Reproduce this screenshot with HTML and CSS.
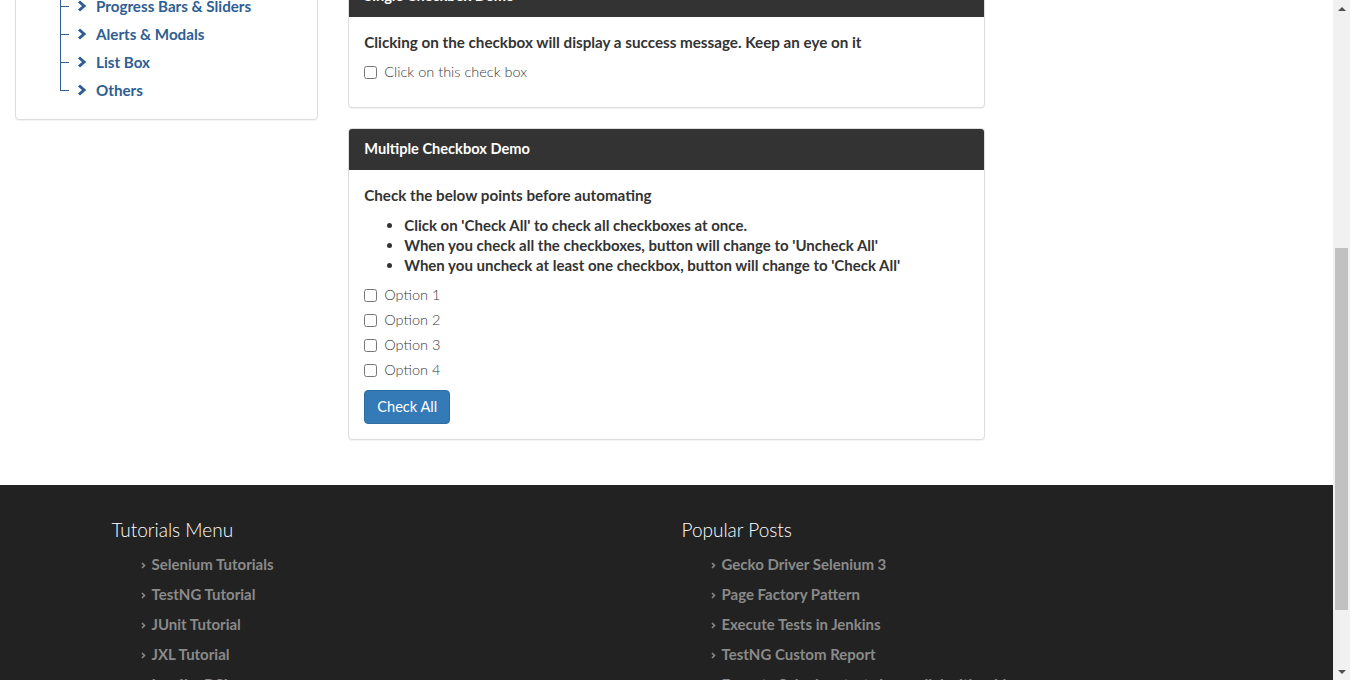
FILE: index.html
```html
<!DOCTYPE html>
<html lang="en">
<head>
<meta charset="utf-8">
<title>Selenium Easy - Checkbox demo</title>
<link rel="stylesheet" href="styles.css">
</head>
<body>
<header class="site-header">
  <div class="brand">Selenium Easy</div>
  <div class="tagline">Learn Selenium with Best Practices and Examples</div>
</header>
<nav class="navbar">
  <a class="nav-link">Demo Home</a>
  <a class="nav-link">Input Forms</a>
  <a class="nav-link">Date pickers</a>
  <a class="nav-link">Table</a>
  <a class="nav-link">Progress Bars</a>
  <a class="nav-link">Alerts &amp; Modals</a>
  <a class="nav-link">List Box</a>
  <a class="nav-link">Others</a>
</nav>

<div class="page">
  <aside class="sidebar">
    <div class="panel">
      <div class="panel-heading">Menu List</div>
      <div class="panel-body">
        <ul class="tree">
          <li><a class="tree-link"><svg class="chev" viewBox="0 0 9 12" width="9" height="12"><polyline points="2,1.5 7,6 2,10.5"/></svg>Input Forms</a></li>
          <li><a class="tree-link"><svg class="chev" viewBox="0 0 9 12" width="9" height="12"><polyline points="2,1.5 7,6 2,10.5"/></svg>Date pickers</a></li>
          <li><a class="tree-link"><svg class="chev" viewBox="0 0 9 12" width="9" height="12"><polyline points="2,1.5 7,6 2,10.5"/></svg>Table</a></li>
          <li><a class="tree-link"><svg class="chev" viewBox="0 0 9 12" width="9" height="12"><polyline points="2,1.5 7,6 2,10.5"/></svg>Progress Bars &amp; Sliders</a></li>
          <li><a class="tree-link"><svg class="chev" viewBox="0 0 9 12" width="9" height="12"><polyline points="2,1.5 7,6 2,10.5"/></svg>Alerts &amp; Modals</a></li>
          <li><a class="tree-link"><svg class="chev" viewBox="0 0 9 12" width="9" height="12"><polyline points="2,1.5 7,6 2,10.5"/></svg>List Box</a></li>
          <li><a class="tree-link"><svg class="chev" viewBox="0 0 9 12" width="9" height="12"><polyline points="2,1.5 7,6 2,10.5"/></svg>Others</a></li>
        </ul>
      </div>
    </div>
  </aside>

  <main class="content">
    <div class="intro">This would be your first example to start with if you are a beginner. Below are the two examples to check a single checkbox and multiple checkboxes.</div>

    <div class="panel">
      <div class="panel-heading">Single Checkbox Demo</div>
      <div class="panel-body">
        <p class="lead-text">Clicking on the checkbox will display a success message. Keep an eye on it</p>
        <div class="checkbox"><label><input type="checkbox">Click on this check box</label></div>
      </div>
    </div>

    <div class="panel">
      <div class="panel-heading">Multiple Checkbox Demo</div>
      <div class="panel-body">
        <p class="lead-text">Check the below points before automating</p>
        <ul class="points">
          <li>Click on 'Check All' to check all checkboxes at once.</li>
          <li>When you check all the checkboxes, button will change to 'Uncheck All'</li>
          <li>When you uncheck at least one checkbox, button will change to 'Check All'</li>
        </ul>
        <div class="checkbox"><label><input type="checkbox">Option 1</label></div>
        <div class="checkbox"><label><input type="checkbox">Option 2</label></div>
        <div class="checkbox"><label><input type="checkbox">Option 3</label></div>
        <div class="checkbox"><label><input type="checkbox">Option 4</label></div>
        <button class="btn" type="button">Check All</button>
      </div>
    </div>
  </main>
</div>

<footer class="footer">
  <div class="footer-inner">
    <div class="footer-col">
      <h3 class="footer-title">Tutorials Menu</h3>
      <ul class="footer-list">
        <li><svg class="fchev" viewBox="0 0 5 7" width="5" height="7"><polyline points="1,1 3.5,3.5 1,6"/></svg>Selenium Tutorials</li>
        <li><svg class="fchev" viewBox="0 0 5 7" width="5" height="7"><polyline points="1,1 3.5,3.5 1,6"/></svg>TestNG Tutorial</li>
        <li><svg class="fchev" viewBox="0 0 5 7" width="5" height="7"><polyline points="1,1 3.5,3.5 1,6"/></svg>JUnit Tutorial</li>
        <li><svg class="fchev" viewBox="0 0 5 7" width="5" height="7"><polyline points="1,1 3.5,3.5 1,6"/></svg>JXL Tutorial</li>
        <li><svg class="fchev" viewBox="0 0 5 7" width="5" height="7"><polyline points="1,1 3.5,3.5 1,6"/></svg>Log4j + DSL</li>
        <li><svg class="fchev" viewBox="0 0 5 7" width="5" height="7"><polyline points="1,1 3.5,3.5 1,6"/></svg>Maven Tutorial</li>
      </ul>
    </div>
    <div class="footer-col">
      <h3 class="footer-title">Popular Posts</h3>
      <ul class="footer-list">
        <li><svg class="fchev" viewBox="0 0 5 7" width="5" height="7"><polyline points="1,1 3.5,3.5 1,6"/></svg>Gecko Driver Selenium 3</li>
        <li><svg class="fchev" viewBox="0 0 5 7" width="5" height="7"><polyline points="1,1 3.5,3.5 1,6"/></svg>Page Factory Pattern</li>
        <li><svg class="fchev" viewBox="0 0 5 7" width="5" height="7"><polyline points="1,1 3.5,3.5 1,6"/></svg>Execute Tests in Jenkins</li>
        <li><svg class="fchev" viewBox="0 0 5 7" width="5" height="7"><polyline points="1,1 3.5,3.5 1,6"/></svg>TestNG Custom Report</li>
        <li><svg class="fchev" viewBox="0 0 5 7" width="5" height="7"><polyline points="1,1 3.5,3.5 1,6"/></svg>Execute Selenium tests in parallel with grid</li>
        <li><svg class="fchev" viewBox="0 0 5 7" width="5" height="7"><polyline points="1,1 3.5,3.5 1,6"/></svg>WebDriver Waits Examples</li>
      </ul>
    </div>
  </div>
</footer>

<div class="scrollbar" aria-hidden="true">
  <div class="sb-btn"><span class="sb-up"></span></div>
  <div class="sb-track"><div class="sb-thumb"></div></div>
  <div class="sb-btn"><span class="sb-down"></span></div>
</div>
<script src="script.js"></script>
</body>
</html>
```

FILE: styles.css
```css
* { box-sizing: border-box; }
html { scroll-behavior: auto; }
body {
  margin: 0;
  padding-right: 17px;
  font-family: "Lato", "Open Sans", sans-serif;
  font-size: 14px;
  line-height: 20px;
  color: #333;
  background: #fff;
}

/* hidden top area */
.site-header {
  height: 196px;
  padding: 40px 15px 0;
}
.brand { font-size: 36px; line-height: 44px; font-weight: 700; color: #337ab7; }
.tagline { margin-top: 10px; color: #777; }
.navbar {
  height: 50px;
  margin-bottom: 40px;
  background: #333;
  display: flex;
  gap: 20px;
  align-items: center;
  padding: 0 15px;
}
.nav-link { color: #ddd; }

/* layout */
.page {
  display: flex;
  margin-bottom: 25px;
}
.sidebar {
  width: 25%;
  padding: 0 15px;
}
.content {
  width: 50%;
  padding: 0 15px;
}
.intro {
  height: 104px;
  margin-bottom: 20px;
  padding: 15px;
  color: #555;
}

/* panels */
.panel {
  margin-bottom: 20px;
  background: #fff;
  border: 1px solid #ddd;
  border-radius: 4px;
  box-shadow: 0 1px 1px rgba(0,0,0,.05);
}
.panel-heading {
  padding: 10px 15px;
  border-bottom: 1px solid #333;
  background: #333;
  color: #fff;
  font-weight: 700;
  font-size: 14.6px;
  line-height: 20px;
  border-radius: 3px 3px 0 0;
}
.panel-body { padding: 15px; }

/* tree */
.tree {
  list-style: none;
  margin: 0;
  padding: 0 0 0 29px;
}
.tree li {
  position: relative;
  height: 28px;
  padding-left: 17px;
}
.tree li::before {
  content: "";
  position: absolute;
  left: 0;
  top: 0;
  width: 8px;
  height: 14px;
  border-left: 1px solid #2e5e92;
  border-bottom: 1px solid #2e5e92;
}
.tree li:not(:last-child)::after {
  content: "";
  position: absolute;
  left: 0;
  top: 0;
  bottom: 0;
  border-left: 1px solid #2e5e92;
}
.tree-link {
  display: flex;
  align-items: center;
  height: 28px;
  color: #2e5e92;
  font-size: 15.2px;
  font-weight: 700;
}
.chev {
  margin-right: 10px;
  fill: none;
  stroke: #2e5e92;
  stroke-width: 3;
  stroke-linejoin: miter;
}

/* content */
.lead-text {
  margin: 0 0 10px;
  font-size: 15.2px;
  font-weight: 700;
  color: #333;
}
.points {
  margin: 0 0 10px;
  padding-left: 40px;
  font-size: 15px;
  font-weight: 700;
}
.checkbox {
  margin: 10px 0;
}
.checkbox + .checkbox { margin-top: -5px; }
.checkbox label {
  display: flex;
  align-items: center;
  gap: 7px;
  min-height: 20px;
  color: #3a3a3a;
  font-size: 14.5px;
  font-weight: 300;
}
.checkbox input {
  width: 13px;
  height: 13px;
  margin: 0;
}
.btn {
  display: block;
  padding: 6px 12px;
  font-family: inherit;
  font-size: 14.6px;
  line-height: 20px;
  color: #fff;
  background: #337ab7;
  border: 1px solid #2e6da4;
  border-radius: 4px;
}

/* footer */
.footer {
  min-height: 297px;
  background: #222;
  padding-top: 33px;
}
.footer-inner {
  max-width: 1140px;
  margin: 0 auto;
  padding: 0 15px;
  display: grid;
  grid-template-columns: 1fr 1fr;
  column-gap: 30px;
}
.footer-title {
  margin: 0 0 12px;
  font-size: 19px;
  line-height: 24px;
  font-weight: 300;
  color: #fff;
}
.footer-list {
  list-style: none;
  margin: 0;
  padding: 0 0 0 29px;
}
.footer-list li {
  display: flex;
  align-items: center;
  margin-bottom: 10px;
  color: #8a8a8a;
  font-weight: 700;
  font-size: 15px;
  line-height: 20px;
  white-space: nowrap;
}
.fchev {
  margin: 3px 6px 0 0;
  fill: none;
  stroke: #8a8a8a;
  stroke-width: 1.6;
}

/* window scrollbar (drawn over the page edge) */
.scrollbar {
  position: fixed;
  top: 0;
  right: 0;
  width: 17px;
  height: 100vh;
  display: flex;
  flex-direction: column;
  background: #f1f1f1;
}
.sb-btn {
  height: 17px;
  display: flex;
  align-items: center;
  justify-content: center;
}
.sb-up, .sb-down {
  width: 0;
  height: 0;
  border-left: 4px solid transparent;
  border-right: 4px solid transparent;
}
.sb-up { border-bottom: 4px solid #505050; }
.sb-down { border-top: 4px solid #505050; }
.sb-track {
  flex: 1;
  padding: 231px 2px 0;
}
.sb-thumb {
  height: 362px;
  background: #c1c1c1;
}
```

FILE: script.js
```js
window.scrollTo(0, 435);
window.addEventListener('load', function () { window.scrollTo(0, 435); });
```
